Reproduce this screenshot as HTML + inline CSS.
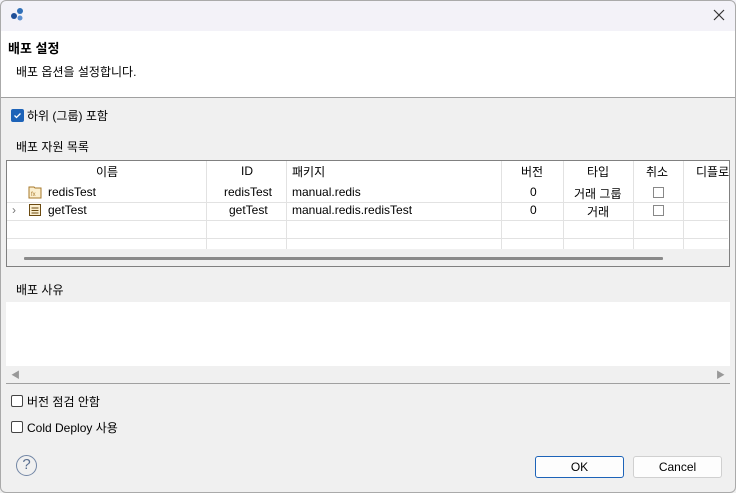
<!DOCTYPE html><html><head><meta charset="utf-8"><style>
*{margin:0;padding:0;box-sizing:border-box}
body{width:736px;height:493px;background:#f0f0f0;font-family:"Liberation Sans","Noto Sans CJK KR",sans-serif;font-size:12px;color:#000;position:relative;overflow:hidden}
.a{position:absolute;white-space:nowrap}
.cb{position:absolute;width:12px;height:12px;border:1px solid #333;border-radius:2px;background:#fff}
.tcb{position:absolute;width:11px;height:11px;border:1px solid #888;background:#fff}
.vl{position:absolute;top:161px;height:88px;width:1px;background:#e2e2e2}
.hl{position:absolute;left:7px;width:721px;height:1px;background:#e2e2e2}
.btn{position:absolute;top:456px;height:22px;width:89px;border:1px solid #d0d0d0;border-radius:3px;background:#fdfdfd;text-align:center;line-height:20px}
</style></head><body>
<div class="a" style="left:0;top:0;width:736px;height:31px;background:#f3f2f8"></div>
<svg class="a" style="left:9px;top:7px" width="16" height="16"><circle cx="11" cy="4" r="3" fill="#2f6fb7"/><circle cx="5" cy="9" r="3" fill="#1f4f98"/><circle cx="11" cy="11" r="2.5" fill="#5c8fd0"/></svg>
<svg class="a" style="left:713px;top:9px" width="12" height="12"><path d="M1 1L11 11M11 1L1 11" stroke="#333" stroke-width="1.2"/></svg>
<div class="a" style="left:0;top:31px;width:736px;height:66px;background:#fff"></div>
<div class="a" style="left:0;top:97px;width:736px;height:1px;background:#a0a0a0"></div>
<div class="a" style="left:8px;top:38px;font-weight:bold;font-size:13px">배포 설정</div>
<div class="a" style="left:16px;top:63px">배포 옵션을 설정합니다.</div>
<div class="a" style="left:11px;top:109px;width:13px;height:13px;background:#1d63b8;border-radius:2px"><svg width="13" height="13"><path d="M3.5 6.5L5.5 8.5L9.5 4.5" stroke="#fff" stroke-width="1.3" fill="none"/></svg></div>
<div class="a" style="left:27px;top:107px">하위 (그룹) 포함</div>
<div class="a" style="left:16px;top:138px">배포 자원 목록</div>
<div class="a" style="left:6px;top:160px;width:724px;height:107px;border:1px solid #808080;background:#f0f0f0"></div>
<div class="a" style="left:7px;top:161px;width:722px;height:88px;background:#fff"></div>
<div class="vl" style="left:206px"></div><div class="vl" style="left:286px"></div><div class="vl" style="left:501px"></div><div class="vl" style="left:563px"></div><div class="vl" style="left:633px"></div><div class="vl" style="left:683px"></div>
<div class="hl" style="top:202px"></div><div class="hl" style="top:220px"></div><div class="hl" style="top:238px"></div>
<div class="a" style="top:163px;left:96px">이름</div>
<div class="a" style="top:164px;left:241px">ID</div>
<div class="a" style="top:163px;left:292px">패키지</div>
<div class="a" style="top:163px;left:521px">버전</div>
<div class="a" style="top:163px;left:587px">타입</div>
<div class="a" style="top:163px;left:646px">취소</div>
<div class="a" style="top:163px;left:696px">디플로</div>
<svg class="a" style="left:28px;top:185px" width="14" height="14"><path d="M1 2h5l1 1h6v10H1z" fill="#fbefd0" stroke="#a7782a"/><text x="3" y="11" font-size="6" fill="#a7782a">fx</text></svg>
<div class="a" style="top:185px;left:48px">redisTest</div>
<div class="a" style="top:185px;left:224px">redisTest</div>
<div class="a" style="top:185px;left:292px">manual.redis</div>
<div class="a" style="top:185px;left:530px">0</div>
<div class="a" style="top:185px;left:574px">거래 그룹</div>
<div class="tcb" style="top:187px;left:653px"></div>
<div class="a" style="top:203px;left:12px;color:#777">›</div>
<svg class="a" style="left:28px;top:203px" width="14" height="14"><rect x="1.5" y="1.5" width="11" height="11" fill="#fbefd0" stroke="#6b4a10"/><path d="M3.5 5h7M3.5 7.5h7M3.5 10h7" stroke="#6b4a10"/></svg>
<div class="a" style="top:203px;left:48px">getTest</div>
<div class="a" style="top:203px;left:229px">getTest</div>
<div class="a" style="top:203px;left:292px">manual.redis.redisTest</div>
<div class="a" style="top:203px;left:530px">0</div>
<div class="a" style="top:203px;left:587px">거래</div>
<div class="tcb" style="top:205px;left:653px"></div>
<div class="a" style="left:24px;top:257px;width:639px;height:3px;background:#8a8a8a;border-radius:1px"></div>
<div class="a" style="left:16px;top:281px">배포 사유</div>
<div class="a" style="left:6px;top:302px;width:724px;height:64px;background:#fff"></div>
<div class="a" style="left:6px;top:383px;width:724px;height:1px;background:#a0a0a0"></div>
<div class="a" style="left:11px;top:368px;color:#999;font-size:9px">◀</div>
<div class="a" style="left:716px;top:368px;color:#999;font-size:9px">▶</div>
<div class="cb" style="top:395px;left:11px;border-color:#444"></div>
<div class="a" style="left:27px;top:393px">버전 점검 안함</div>
<div class="cb" style="top:421px;left:11px;border-color:#444"></div>
<div class="a" style="left:27px;top:419px">Cold Deploy 사용</div>
<div class="a" style="left:16px;top:455px;width:21px;height:21px;border:1.5px solid #7286a5;border-radius:50%;text-align:center;line-height:18px;color:#5a6f90;font-size:15px">?</div>
<div class="btn" style="left:535px;border-color:#1d63b8">OK</div>
<div class="btn" style="left:633px">Cancel</div>
<div class="a" style="left:0;top:0;width:736px;height:493px;border:1px solid #aaa;border-radius:6px"></div>
</body></html>
